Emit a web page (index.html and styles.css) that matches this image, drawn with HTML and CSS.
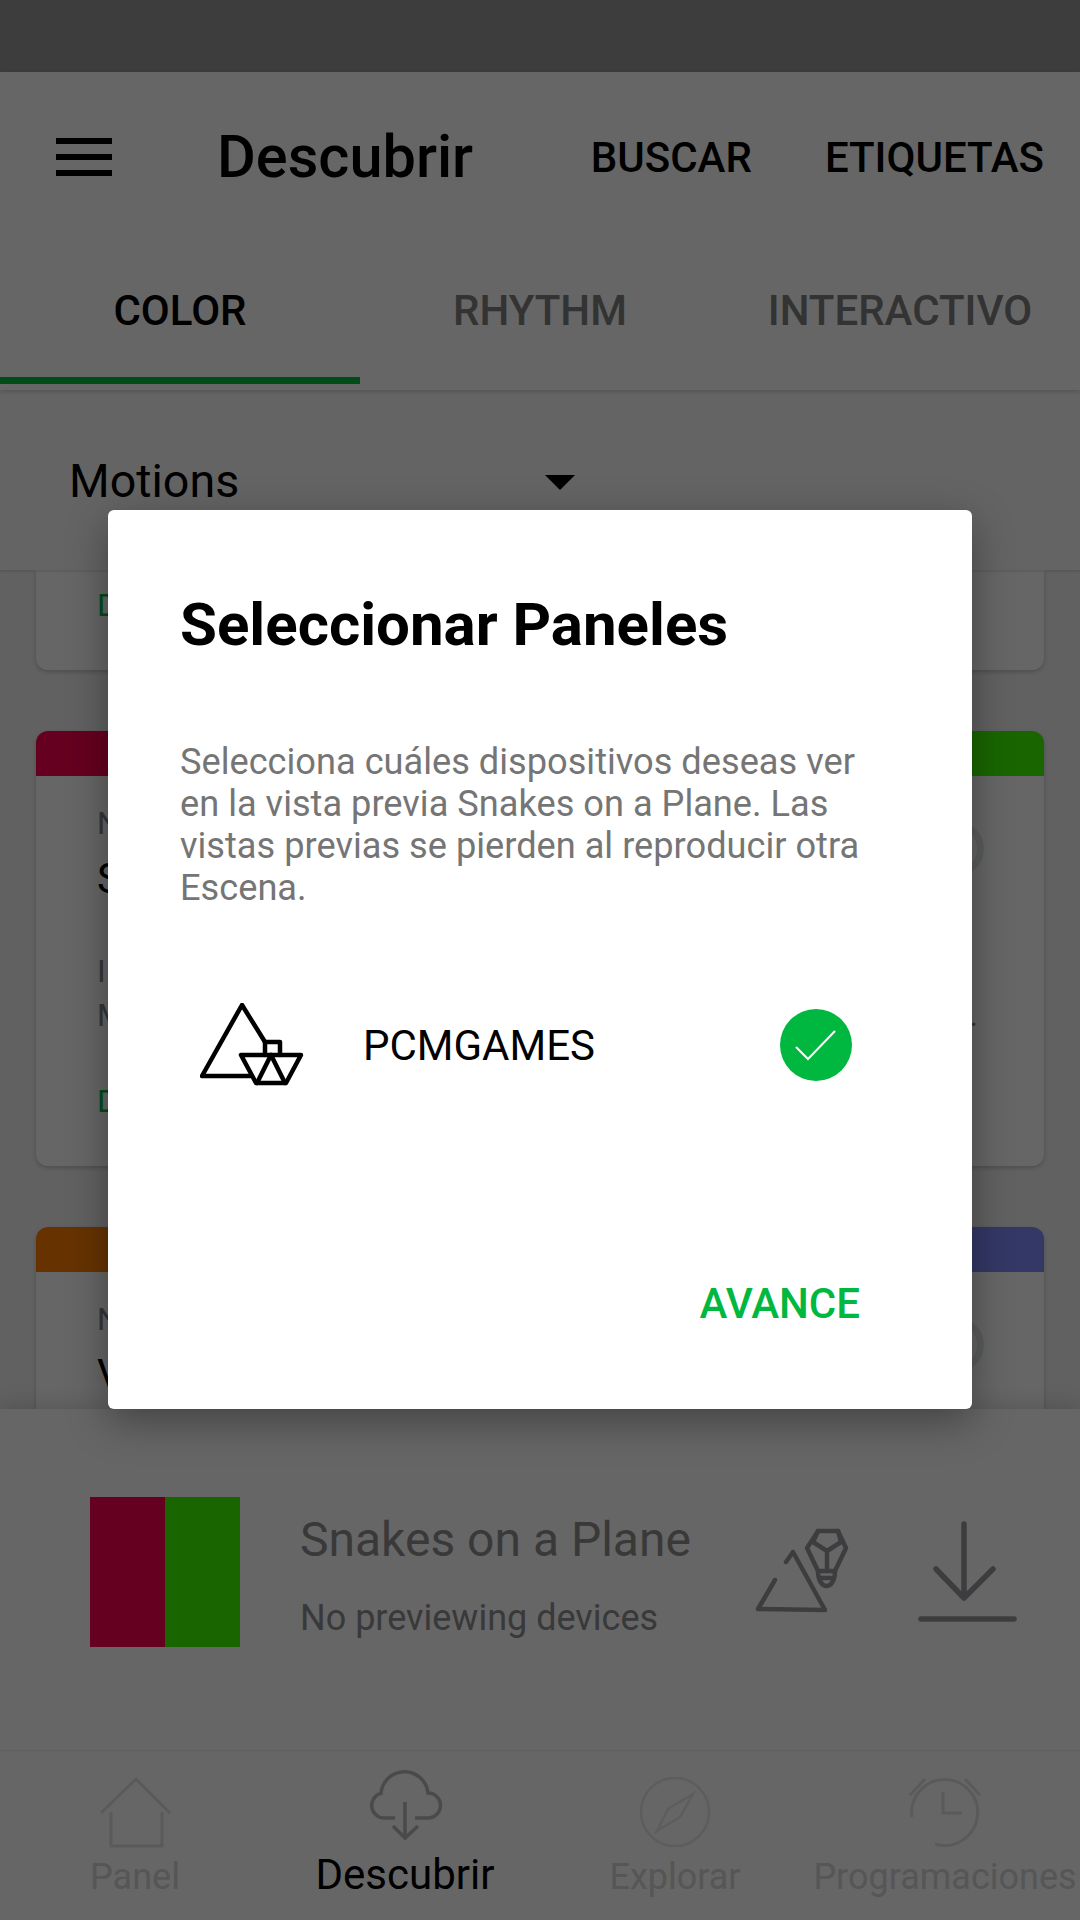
FILE: index.html
```html
<!DOCTYPE html>
<html lang="es">

<head>
  <meta charset="UTF-8" />
  <meta name="viewport" content="width=device-width, initial-scale=1.0" />
  <title>Descubrir</title>
  <link rel="stylesheet" href="styles.css">
</head>

<body>
  <div class="app">
    <div class="status"></div>

    <div class="header">
      <div class="topbar">
        <div class="burger"><i></i><i></i><i></i></div>
        <div class="page-title">Descubrir</div>
        <div class="actions">
          <span>BUSCAR</span>
          <span>ETIQUETAS</span>
        </div>
      </div>
      <div class="tabs">
        <div class="tab active">COLOR</div>
        <div class="tab">RHYTHM</div>
        <div class="tab">INTERACTIVO</div>
      </div>
    </div>

    <div class="filter">
      <div class="select">
        <span>Motions</span>
        <i class="caret"></i>
      </div>
    </div>

    <!-- only the first letters of the cards show beside the dialog -->
    <div class="list">
      <div class="card card-cut">
        <div class="card-link">D</div>
      </div>

      <div class="card">
        <div class="card-band band-snakes"></div>
        <div class="card-body">
          <div class="card-top">
            <div>
              <div class="card-label">N</div>
              <div class="card-name">S</div>
            </div>
            <div class="ring"></div>
          </div>
          <div class="card-desc">
            <div>I</div>
            <div class="card-desc-last"><span>M</span><span>.</span></div>
          </div>
          <div class="card-link">D</div>
        </div>
      </div>

      <div class="card">
        <div class="card-band band-waves"></div>
        <div class="card-body">
          <div class="card-top">
            <div>
              <div class="card-label">N</div>
              <div class="card-name">V</div>
            </div>
            <div class="ring"></div>
          </div>
        </div>
      </div>
    </div>

    <div class="preview">
      <div class="swatch"><i class="swatch-red"></i><i class="swatch-green"></i></div>
      <div class="preview-text">
        <div class="preview-name">Snakes on a Plane</div>
        <div class="preview-sub">No previewing devices</div>
      </div>
      <svg class="preview-icons" width="290" height="110" viewBox="750 1515 290 110">
        <g fill="none" stroke="#9a9a9e" stroke-width="4.5" stroke-linecap="round" stroke-linejoin="round">
          <path d="M775 1579 758 1608 825 1609 793 1551 786 1561" />
          <path d="M818 1530H838L846 1547 835 1570H818L807 1547Z" />
          <path d="M818 1530 813 1541 827 1550 841 1541 838 1530M827 1550V1570" />
          <path d="M818 1570C818 1590 835 1590 835 1570M819 1577H834" />
        </g>
        <g fill="none" stroke="#9a9a9e" stroke-width="5.5" stroke-linecap="round" stroke-linejoin="round">
          <path d="M964 1523V1597M936 1568 964 1597 993 1568M921 1618H1014" />
        </g>
      </svg>
    </div>

    <div class="nav">
      <div class="nav-item">
        <svg width="80" height="80" viewBox="95 1770 80 80">
          <path class="nav-stroke" d="M101 1813 136 1779 170 1813M111 1812V1846H162V1812" />
        </svg>
        <span>Panel</span>
      </div>
      <div class="nav-item active">
        <svg width="80" height="80" viewBox="365 1770 80 80">
          <path class="nav-stroke" d="M395 1818H384A12.5 12.5 0 0 1 381 1793.4A23.6 23.6 0 0 1 428 1793A12.5 12.5 0 0 1 428 1818H415M405 1802V1838M393 1826 405 1838 418 1826" />
        </svg>
        <span>Descubrir</span>
      </div>
      <div class="nav-item">
        <svg width="80" height="80" viewBox="635 1770 80 80">
          <circle class="nav-stroke compass" cx="675" cy="1812" r="34" />
          <path class="nav-stroke compass" d="M693 1794 680 1817 657 1831 668 1809ZM675 1812.5H675.5" />
        </svg>
        <span>Explorar</span>
      </div>
      <div class="nav-item">
        <svg width="80" height="80" viewBox="905 1770 80 80">
          <path class="nav-stroke" d="M912 1817A33 33 0 1 1 935 1844M943 1792V1813H962M910 1795 925 1779M965 1779 980 1795" />
        </svg>
        <span>Programaciones</span>
      </div>
    </div>

    <div class="scrim"></div>

    <div class="dialog">
      <h2>Seleccionar Paneles</h2>
      <p>Selecciona cuáles dispositivos deseas ver en la vista previa Snakes on a Plane. Las vistas previas se pierden al reproducir otra Escena.</p>
      <div class="device">
        <svg width="104" height="84" viewBox="199 1003 104 84">
          <g fill="none" stroke="#000" stroke-width="4.5" stroke-linejoin="round" stroke-linecap="round">
            <path d="M250 1076H201L241 1005 264 1042" />
            <path d="M264 1055V1042H279V1055" />
            <path d="M240 1055H300L285 1083H255Z" />
            <path d="M270 1055 256 1083M270 1055 284 1083" />
          </g>
        </svg>
        <span class="device-name">PCMGAMES</span>
        <svg class="device-check" width="72" height="72" viewBox="780 1008 72 72">
          <circle cx="816" cy="1044" r="36" fill="#00b840" />
          <path d="M796 1046 808 1058 835 1030" fill="none" stroke="#fff" stroke-width="2" />
        </svg>
      </div>
      <div class="dialog-actions">AVANCE</div>
    </div>
  </div>
</body>

</html>
```

FILE: styles.css
```css
* {
  box-sizing: border-box;
}

body {
  margin: 0;
  font-family: Roboto, "Liberation Sans", sans-serif;
  color: #000;
}

.app {
  position: relative;
  width: 1080px;
  height: 1920px;
  display: flex;
  flex-direction: column;
  overflow: hidden;
  background-color: #f2f2f2;
}

.status {
  height: 72px;
  flex-shrink: 0;
  background-color: #989898;
}

/* header */

.header {
  position: relative;
  z-index: 3;
  height: 318px;
  flex-shrink: 0;
  background-color: #fff;
  box-shadow: 0 2px 4px rgba(0, 0, 0, .15);
}

.topbar {
  height: 170px;
  display: flex;
  align-items: center;
  padding: 0 36px 0 56px;
}

.burger {
  width: 56px;
  display: flex;
  flex-direction: column;
  gap: 10px;
}

.burger i {
  display: block;
  height: 6px;
  background-color: #000;
}

.page-title {
  margin-left: 105px;
  font-size: 59.5px;
  font-weight: 500;
}

.actions {
  margin-left: auto;
  display: flex;
  gap: 73px;
  font-size: 42px;
  font-weight: 500;
}

.tabs {
  display: flex;
}

.tab {
  width: 360px;
  height: 142px;
  padding-top: 2px;
  display: flex;
  align-items: center;
  justify-content: center;
  font-size: 42px;
  font-weight: 500;
  color: #808080;
  border-bottom: 7px solid transparent;
}

.tab.active {
  color: #000;
  border-bottom-color: #00c040;
}

/* filter */

.filter {
  position: relative;
  z-index: 2;
  height: 180px;
  flex-shrink: 0;
  padding: 2px 0 0 69px;
  display: flex;
  align-items: center;
  background-color: #fafafa;
  box-shadow: 0 1px 3px rgba(0, 0, 0, .15);
}

.select {
  width: 506px;
  display: flex;
  align-items: center;
  justify-content: space-between;
  font-size: 46.6px;
}

.caret {
  width: 0;
  height: 0;
  margin-top: 2px;
  border-left: 15px solid transparent;
  border-right: 15px solid transparent;
  border-top: 15px solid #000;
}

/* cards */

.list {
  flex: 1;
  min-height: 0;
  overflow: hidden;
  padding: 0 36px;
  display: flex;
  flex-direction: column;
  gap: 61px;
}

.card {
  flex-shrink: 0;
  height: 435px;
  border-radius: 12px;
  overflow: hidden;
  background-color: #fff;
  box-shadow: 0 2px 4px rgba(0, 0, 0, .2);
}

.card-cut {
  height: 100px;
  border-radius: 0 0 12px 12px;
  padding: 16px 0 0 61px;
}

.card-band {
  height: 45px;
}

.band-snakes {
  background: linear-gradient(to right, #ff0050 50%, #40ff00 50%);
}

.band-waves {
  background: linear-gradient(to right, #ff8000 50%, #808cff 50%);
}

.card-body {
  padding: 28px 60px 0 61px;
}

.card-top {
  display: flex;
  justify-content: space-between;
  align-items: flex-start;
}

.card-label {
  font-size: 32px;
  color: #888;
}

.card-name {
  margin-top: 12px;
  font-size: 42px;
}

.ring {
  width: 56px;
  height: 56px;
  margin-top: 17px;
  border: 7px solid #e0e6ea;
  border-radius: 50%;
}

.card-desc {
  margin-top: 46px;
  font-size: 32px;
  line-height: 44px;
  color: #888;
}

.card-desc-last {
  margin-right: 6px;
  display: flex;
  justify-content: space-between;
}

.card-link {
  margin-top: 45px;
  font-size: 32px;
  color: #00c040;
}

.card-cut .card-link {
  margin-top: 0;
}

/* preview bar */

.preview {
  position: relative;
  z-index: 2;
  height: 341px;
  flex-shrink: 0;
  padding: 88px 0 0 90px;
  display: flex;
  background-color: #fff;
  box-shadow: 0 -4px 20px rgba(0, 0, 0, .15);
}

.swatch {
  width: 150px;
  height: 150px;
  display: flex;
}

.swatch i {
  flex: 1;
}

.swatch-red {
  background-color: #ff0050;
}

.swatch-green {
  background-color: #40ff00;
}

.preview-text {
  margin-left: 60px;
  padding-top: 14px;
}

.preview-name {
  font-size: 48px;
  color: #8e8e92;
}

.preview-sub {
  margin-top: 29px;
  font-size: 36px;
  color: #8e8e92;
}

.preview-icons {
  position: absolute;
  left: 750px;
  top: 107px;
}

/* bottom nav */

.nav {
  position: relative;
  z-index: 2;
  height: 170px;
  flex-shrink: 0;
  padding-top: 19px;
  display: flex;
  background-color: #fff;
  border-top: 1px solid #eee;
}

.nav-item {
  width: 270px;
  display: flex;
  flex-direction: column;
  align-items: center;
  white-space: nowrap;
  font-size: 36px;
  color: #d6d6d6;
}

.nav-item svg {
  display: block;
  margin-bottom: 6px;
  flex-shrink: 0;
}

.nav-stroke {
  fill: none;
  stroke: #e2e2e2;
  stroke-width: 3;
}

.nav-stroke.compass {
  stroke: #e8e8e8;
  stroke-width: 2.5;
}

.nav-item.active {
  font-size: 42px;
  color: #000;
}

.nav-item.active svg {
  margin-bottom: 0;
}

.nav-item.active .nav-stroke {
  stroke: #b8b8b8;
  stroke-width: 3.5;
}

/* dialog */

.scrim {
  position: absolute;
  inset: 0;
  z-index: 5;
  background-color: rgba(0, 0, 0, .6);
}

.dialog {
  position: absolute;
  z-index: 6;
  left: 108px;
  top: 510px;
  width: 864px;
  height: 899px;
  padding: 82px 72px 0;
  border-radius: 6px;
  background-color: #fff;
  box-shadow: 0 12px 40px rgba(0, 0, 0, .35);
}

.dialog h2 {
  margin: 0;
  font-size: 60px;
  line-height: 66px;
  font-weight: 700;
}

.dialog p {
  margin: 83px 10px 0 0;
  font-size: 36.2px;
  line-height: 42px;
  color: #757575;
}

.device {
  margin-top: 94px;
  padding: 0 48px 0 20px;
  display: flex;
  align-items: center;
}

.device-name {
  margin-left: 59px;
  font-size: 42px;
}

.device-check {
  margin-left: auto;
}

.dialog-actions {
  margin-top: 192px;
  padding-right: 40px;
  text-align: right;
  font-size: 42px;
  font-weight: 500;
  color: #00b840;
}
```
